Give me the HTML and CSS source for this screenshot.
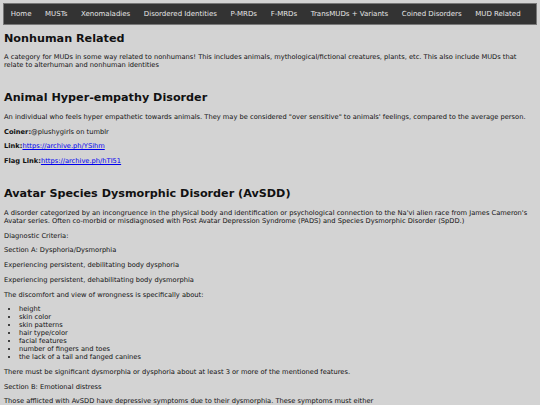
FILE: index.html
```html
<!DOCTYPE html>
<html lang="en">
<head>
    <meta charset="UTF-8">
    <meta name="viewport" content="width=device-width, initial-scale=1.0">
    <title>Nonhuman Related</title>
    <link rel="stylesheet" href="styles.css">
</head>
<body>
    <nav class="topnav">
        <a href="#">Home</a>
        <a href="#">MUSTs</a>
        <a href="#">Xenomaladies</a>
        <a href="#">Disordered Identities</a>
        <a href="#">P-MRDs</a>
        <a href="#">F-MRDs</a>
        <a href="#">TransMUDs + Variants</a>
        <a href="#">Coined Disorders</a>
        <a href="#">MUD Related</a>
    </nav>

    <div class="intro">
        <h1>Nonhuman Related</h1>
        <p>A category for MUDs in some way related to nonhumans! This includes animals, mythological/fictional creatures, plants, etc. This also include MUDs that relate to alterhuman and nonhuman identities</p>
    </div>

    <div class="entry">
        <h2>Animal Hyper-empathy Disorder</h2>
        <p>An individual who feels hyper empathetic towards animals. They may be considered "over sensitive" to animals' feelings, compared to the average person.</p>
        <p><b>Coiner:</b>@plushygirls on tumblr</p>
        <p><b>Link:</b><a href="#">https://archive.ph/YSihm</a></p>
        <p><b>Flag Link:</b><a href="#">https://archive.ph/hTI51</a></p>
    </div>

    <div class="entry">
        <h2>Avatar Species Dysmorphic Disorder (AvSDD)</h2>
        <p>A disorder categorized by an incongruence in the physical body and identification or psychological connection to the Na'vi alien race from James Cameron's Avatar series. Often co-morbid or misdiagnosed with Post Avatar Depression Syndrome (PADS) and Species Dysmorphic Disorder (SpDD.)</p>
        <p>Diagnostic Criteria:</p>
        <p>Section A: Dysphoria/Dysmorphia</p>
        <p>Experiencing persistent, debilitating body dysphoria</p>
        <p>Experiencing persistent, dehabilitating body dysmorphia</p>
        <p>The discomfort and view of wrongness is specifically about:</p>
        <ul>
            <li>height</li>
            <li>skin color</li>
            <li>skin patterns</li>
            <li>hair type/color</li>
            <li>facial features</li>
            <li>number of fingers and toes</li>
            <li>the lack of a tail and fanged canines</li>
        </ul>
        <p>There must be significant dysmorphia or dysphoria about at least 3 or more of the mentioned features.</p>
        <p>Section B: Emotional distress</p>
        <p>Those afflicted with AvSDD have depressive symptoms due to their dysmorphia. These symptoms must either</p>
    </div>
</body>
</html>
```

FILE: styles.css
```css
body {
    font-family: "DejaVu Sans", Verdana, sans-serif;
    font-size: 6.7px;
    line-height: 8px;
    color: #111;
    background-color: #d3d3d3;
    margin: 3px;
}

.topnav {
    display: flex;
    background: #333;
    border: 1px solid #777;
}

.topnav a {
    color: #e6e6e6;
    font-size: 7px;
    text-decoration: none;
    padding: 6px 6.8px;
}

h1, h2 {
    font-size: 11.2px;
    line-height: 13px;
    margin: 8px 1px;
}

h1 {
    margin-top: 7px;
}

h2 {
    margin-top: 22px;
    margin-bottom: 9px;
}

p {
    margin: 6.7px 1px;
}

a {
    color: #0000ee;
}

ul {
    margin: 6px 0;
    padding-left: 16px;
}

.entry {
    margin-top: 18px;
}
```
